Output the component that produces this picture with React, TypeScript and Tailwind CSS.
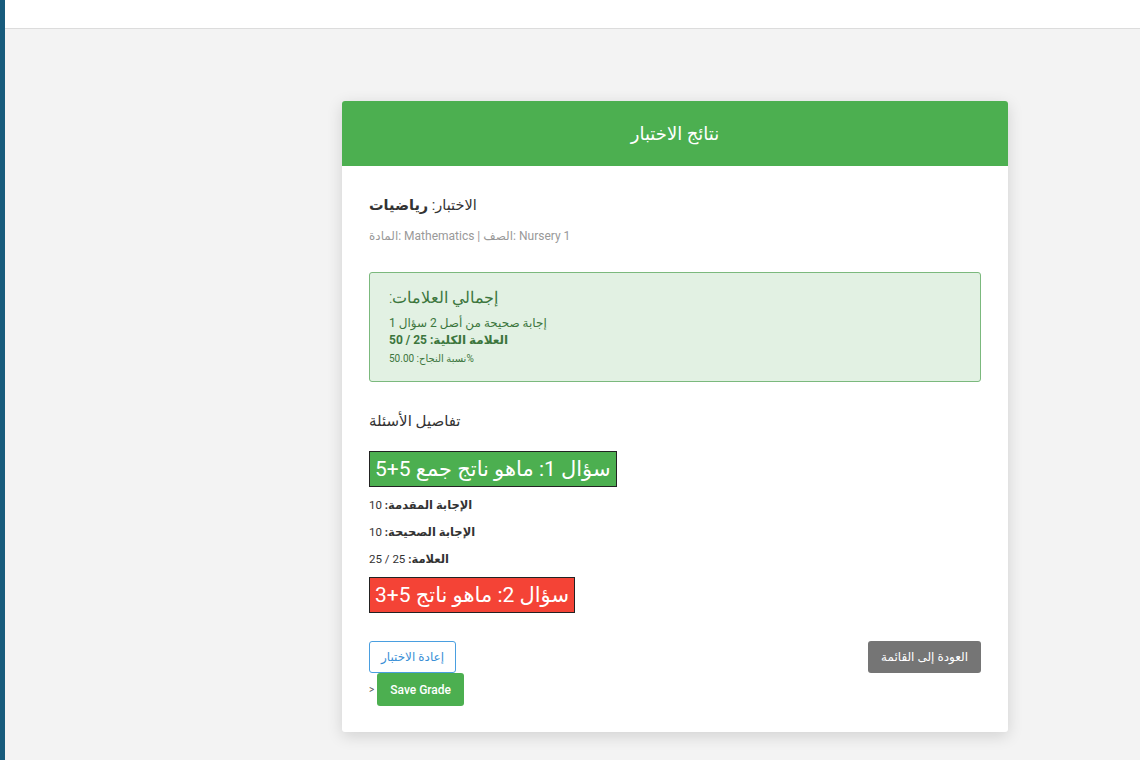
import React from "react";

const font = { fontFamily: "Roboto, 'Noto Sans', 'DejaVu Sans', sans-serif" };

type Answer = { label: string; value: string };

function QuestionBlock({
  title,
  correct,
  answers,
}: {
  title: string;
  correct: boolean;
  answers: Answer[];
}) {
  return (
    <div className="flex flex-col items-start">
      <div
        className={[
          "h-[36px] border border-[#222] px-[5px] text-[21px] leading-[34px] text-white",
          correct ? "bg-[#4caf50]" : "bg-[#f44336]",
        ].join(" ")}
      >
        {title}
      </div>
      {answers.map((a) => (
        <p key={a.label} className="mt-[9px] text-[11.5px] leading-[18px] text-[#333]">
          <b className="font-bold">{a.label}</b> {a.value}
        </p>
      ))}
    </div>
  );
}

export default function App() {
  return (
    <div className="flex min-h-[760px] bg-[#f3f3f3]" style={font}>
      <div className="w-[5px] shrink-0 bg-[#175b7c]" />
      <div className="flex flex-1 flex-col">
        <div className="h-[29px] border-b border-[#dcdcdc] bg-white" />

        <div className="ml-[337px] mt-[72px] w-[666px] rounded-[3px] bg-white shadow-[0_4px_16px_rgba(0,0,0,0.14)]">
          <div className="flex h-[65px] items-center justify-center rounded-t-[3px] bg-[#4caf50] text-[18px] text-white">
            نتائج الاختبار
          </div>

          <div className="flex flex-col items-start px-[27px] pt-[29px] pb-[26px]">
            <p className="text-[14.5px] leading-[22px] text-[#333]">
              الاختبار: <b className="font-bold">رياضيات</b>
            </p>
            <p className="mt-[10px] text-xs leading-[18px] text-[#999]">
              المادة: Mathematics | الصف: Nursery 1
            </p>

            <div className="mt-[27px] w-full rounded-[3px] border border-[#7bb97d] bg-[#e2f1e3] px-[19px] pt-[14px] pb-[15px] text-[#3c763d]">
              <p className="text-[16px] font-light leading-[22px]">:إجمالي العلامات</p>
              <p className="mt-[5px] text-xs leading-[18px]">1 إجابة صحيحة من أصل 2 سؤال</p>
              <p className="text-xs font-bold leading-[17px]">العلامة الكلية: 25 / 50</p>
              <p className="mt-[3px] text-[10px] leading-[14px]">
                <span dir="rtl">%نسبة النجاح: 50.00</span>
              </p>
            </div>

            <p className="mt-[28px] text-[15px] leading-[22px] text-[#333]">تفاصيل الأسئلة</p>

            <div className="mt-[19px] flex flex-col gap-[9px]">
              <QuestionBlock
                title="سؤال 1: ماهو ناتج جمع 5+5"
                correct
                answers={[
                  { label: "الإجابة المقدمة:", value: "10" },
                  { label: "الإجابة الصحيحة:", value: "10" },
                  { label: "العلامة:", value: "25 / 25" },
                ]}
              />
              <QuestionBlock title="سؤال 2: ماهو ناتج 5+3" correct={false} answers={[]} />
            </div>

            <div className="mt-[28px] flex w-full items-start justify-between">
              <div className="flex flex-col items-start">
                <button className="h-[32px] rounded-[3px] border border-[#4a9fe0] bg-white px-[11px] text-xs text-[#3a8fd6]">
                  إعادة الاختبار
                </button>
                <div className="flex items-center">
                  <span className="mr-[3px] text-[10px] text-[#555]">&gt;</span>
                  <button className="h-[33px] rounded-[3px] bg-[#4caf50] px-[13px] text-xs font-medium text-white">
                    Save Grade
                  </button>
                </div>
              </div>
              <button className="h-[32px] rounded-[3px] bg-[#757575] px-[13px] text-xs text-white">
                العودة إلى القائمة
              </button>
            </div>
          </div>
        </div>
      </div>
    </div>
  );
}
